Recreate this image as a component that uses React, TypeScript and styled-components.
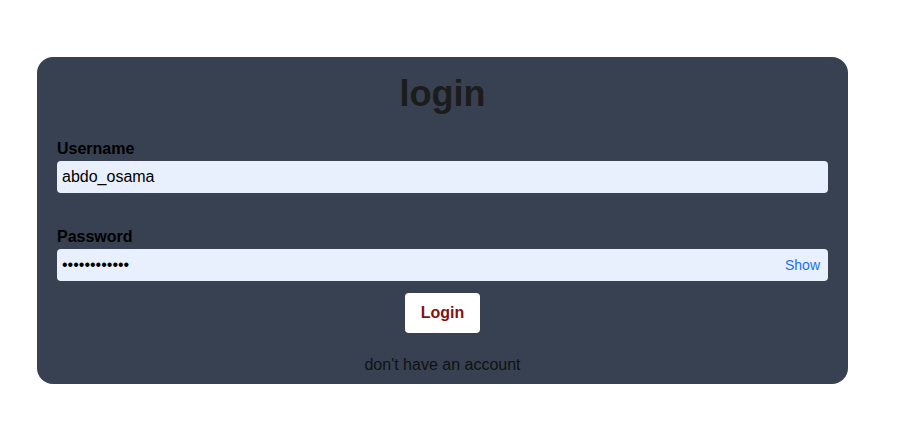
import React, { useState } from "react";
import styled, { createGlobalStyle } from "styled-components";

const GlobalStyle = createGlobalStyle`
  body {
    margin: 0;
    background: #ffffff;
    font-family: "Liberation Sans", Arial, sans-serif;
  }
`;

const Page = styled.div`
  padding: 57px 0 0 37px;
`;

const Card = styled.form`
  width: 811px;
  height: 327px;
  box-sizing: border-box;
  background: #374151;
  border-radius: 16px;
  padding: 16px 20px 0;
  display: flex;
  flex-direction: column;
`;

const Title = styled.h1`
  margin: 0;
  text-align: center;
  font-size: 36px;
  font-weight: 700;
  color: #1c1c1c;
`;

const Field = styled.div<{ gap: number }>`
  display: flex;
  flex-direction: column;
  margin-top: ${(props) => props.gap}px;
`;

const Label = styled.label`
  font-size: 16px;
  font-weight: 700;
  color: #000000;
  margin-bottom: 3px;
`;

const InputBox = styled.div`
  position: relative;
  height: 32px;
  border-radius: 4px;
  background: #e8f0fe;
  display: flex;
  align-items: center;
`;

const TextInput = styled.input`
  flex: 1;
  height: 100%;
  border: 0;
  background: transparent;
  padding: 0 5px;
  font-family: "Liberation Sans", Arial, sans-serif;
  font-size: 16px;
  color: #000000;
  &:focus {
    outline: none;
  }
`;

const ShowButton = styled.button`
  border: 0;
  background: transparent;
  padding: 0 8px 0 4px;
  font-family: "Liberation Sans", Arial, sans-serif;
  font-size: 14px;
  color: #1d6ef0;
  cursor: pointer;
`;

const SubmitButton = styled.button`
  align-self: center;
  margin-top: 12px;
  width: 75px;
  height: 40px;
  border: 0;
  border-radius: 4px;
  background: #ffffff;
  font-family: "Liberation Sans", Arial, sans-serif;
  font-size: 16px;
  font-weight: 700;
  color: #7f1212;
  cursor: pointer;
`;

const Footer = styled.p`
  margin: 23px 0 0;
  text-align: center;
  font-size: 16px;
  color: #111111;
`;

export default function App() {
  const [username, setUsername] = useState("abdo_osama");
  const [password, setPassword] = useState("abdo12345678");
  const [visible, setVisible] = useState(false);

  return (
    <Page>
      <GlobalStyle />
      <Card onSubmit={(e) => e.preventDefault()}>
        <Title>login</Title>
        <Field gap={25}>
          <Label htmlFor="username">Username</Label>
          <InputBox>
            <TextInput
              id="username"
              value={username}
              onChange={(e) => setUsername(e.target.value)}
            />
          </InputBox>
        </Field>
        <Field gap={35}>
          <Label htmlFor="password">Password</Label>
          <InputBox>
            <TextInput
              id="password"
              type={visible ? "text" : "password"}
              value={password}
              onChange={(e) => setPassword(e.target.value)}
            />
            <ShowButton type="button" onClick={() => setVisible(!visible)}>
              {visible ? "Hide" : "Show"}
            </ShowButton>
          </InputBox>
        </Field>
        <SubmitButton type="submit">Login</SubmitButton>
        <Footer>don't have an account</Footer>
      </Card>
    </Page>
  );
}
